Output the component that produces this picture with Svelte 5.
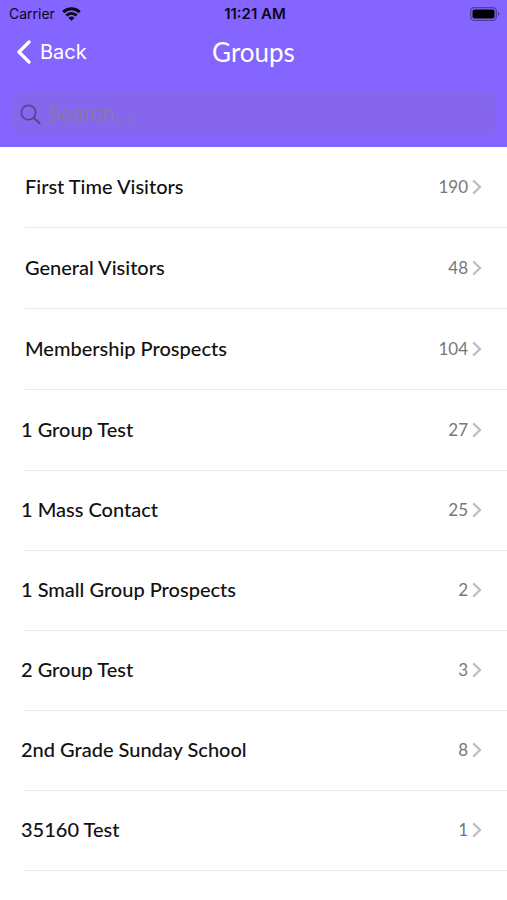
<script>
  const pinned = [
    { name: 'First Time Visitors', count: 190 },
    { name: 'General Visitors', count: 48 },
    { name: 'Membership Prospects', count: 104 }
  ];
  const groups = [
    { name: '1 Group Test', count: 27 },
    { name: '1 Mass Contact', count: 25 },
    { name: '1 Small Group Prospects', count: 2 },
    { name: '2 Group Test', count: 3 },
    { name: '2nd Grade Sunday School', count: 8 },
    { name: '35160 Test', count: 1 }
  ];
  let query = $state('');
  const matches = (list) => list.filter((g) => g.name.toLowerCase().includes(query.toLowerCase()));
</script>

{#snippet row(group)}
  <li>
    <a href="#group">
      <span class="name">{group.name}</span>
      <span class="count">{group.count}</span>
      <svg class="chevron" width="10" height="16" viewBox="0 0 10 16" aria-hidden="true">
        <path d="M1.2 1.400 8 8l-6.800 6.600" fill="none" stroke="#bfbfc1" stroke-width="2.200" />
      </svg>
    </a>
  </li>
{/snippet}

<div class="app">
  <header>
    <div class="status">
      <div class="carrier">
        <span>Carrier</span>
        <svg width="19" height="14" viewBox="0 0 19 14" aria-hidden="true">
          <g fill="none" stroke="#0b0718" stroke-width="2.900">
            <path d="M1.300 5.100a11.700 11.700 0 0 1 16.400 0" />
            <path d="M4.300 8.500a7.400 7.400 0 0 1 10.400 0" />
          </g>
          <path d="M9.500 13.800 6.400 10.900a4.400 4.400 0 0 1 6.200 0z" fill="#0b0718" />
        </svg>
      </div>
      <time>11:21 AM</time>
      <svg class="battery" width="31" height="14" viewBox="0 0 31 14" aria-label="Battery full" role="img">
        <rect x=".7" y=".7" width="25.600" height="12.600" rx="3.500" fill="none" stroke="#4f3c9b" stroke-width="1.300" />
        <rect x="2.500" y="2.500" width="22" height="9" rx="2" fill="#000" />
        <path d="M28 4.800q3.200 2.200 0 4.400z" fill="#4f3c9b" />
      </svg>
    </div>
    <nav>
      <button type="button">
        <svg width="15" height="24" viewBox="0 0 15 24" aria-hidden="true">
          <path d="M13 2 3 12l10 10" fill="none" stroke="#fff" stroke-width="3.200" stroke-linecap="round" stroke-linejoin="round" />
        </svg>
        <span>Back</span>
      </button>
      <h1>Groups</h1>
    </nav>
    <label class="search">
      <svg width="21" height="21" viewBox="0 0 21 21" aria-hidden="true">
        <g fill="none" stroke="#59458f" stroke-width="1.700" stroke-linecap="round">
          <circle cx="8.500" cy="8.500" r="7.200" />
          <path d="m13.800 13.800 5.700 5.400" stroke-width="2.100" />
        </g>
      </svg>
      <input type="text" placeholder="Search..." aria-label="Search groups" bind:value={query} />
    </label>
  </header>
  <main>
    <ul class="pinned">
      {#each matches(pinned) as group}{@render row(group)}{/each}
    </ul>
    <ul class="others">
      {#each matches(groups) as group}{@render row(group)}{/each}
    </ul>
  </main>
</div>

<style>
  :global(body) {
    margin: 0;
    background: #fff;
  }
  .app {
    font-family: Lato, "Open Sans", sans-serif;
    color: #111;
  }
  header {
    background: #8465ff;
    padding-bottom: 11px;
  }
  .status {
    display: grid;
    grid-template-columns: 1fr auto 1fr;
    align-items: center;
    height: 27px;
    padding: 0 6px 0 9px;
    color: #0b0718;
    font: 15px/18px Inter, sans-serif;
  }
  .carrier {
    display: flex;
    align-items: center;
    gap: 7px;
    font-size: 14px;
  }
  time {
    font-weight: 600;
  }
  .battery {
    justify-self: end;
  }
  nav {
    display: grid;
    grid-template-columns: 1fr auto 1fr;
    align-items: center;
    height: 50px;
    padding: 0 16px;
    color: #fff;
  }
  button {
    justify-self: start;
    display: flex;
    align-items: center;
    gap: 9px;
    padding: 0;
    border: 0;
    background: none;
    color: inherit;
    font: 20px/26px Inter, sans-serif;
  }
  h1 {
    margin: 0;
    font-size: 26px;
    line-height: 32px;
    font-weight: 400;
  }
  .search {
    display: flex;
    align-items: center;
    gap: 7px;
    height: 44px;
    margin: 15px 11px 0;
    padding: 0 9px;
    border-radius: 10px;
    background: #8566ec;
  }
  input {
    flex: 1;
    min-width: 0;
    padding: 0;
    border: 0;
    outline: 0;
    background: none;
    color: #fff;
    font: 20px/26px Inter, sans-serif;
  }
  input::placeholder {
    color: #867b9f;
    opacity: 1;
  }
  ul {
    margin: 0;
    padding: 0;
    list-style: none;
  }
  a {
    box-sizing: border-box;
    display: flex;
    align-items: center;
    height: 80px;
    padding: 0 25px;
    color: inherit;
    text-decoration: none;
  }
  li::after {
    content: "";
    display: block;
    height: 1px;
    margin-left: 25px;
    background: #e9e9eb;
  }
  .others {
    padding-top: 1px;
  }
  .others a {
    height: 79px;
    padding-bottom: 2px;
    padding-left: 21px;
  }
  .name {
    flex: 1;
    padding-bottom: 2px;
    font-size: 20px;
    line-height: 26px;
    font-weight: 500;
  }
  .count {
    color: #77777a;
    font-size: 17px;
    line-height: 26px;
  }
  .chevron {
    margin-left: 4px;
  }
</style>
